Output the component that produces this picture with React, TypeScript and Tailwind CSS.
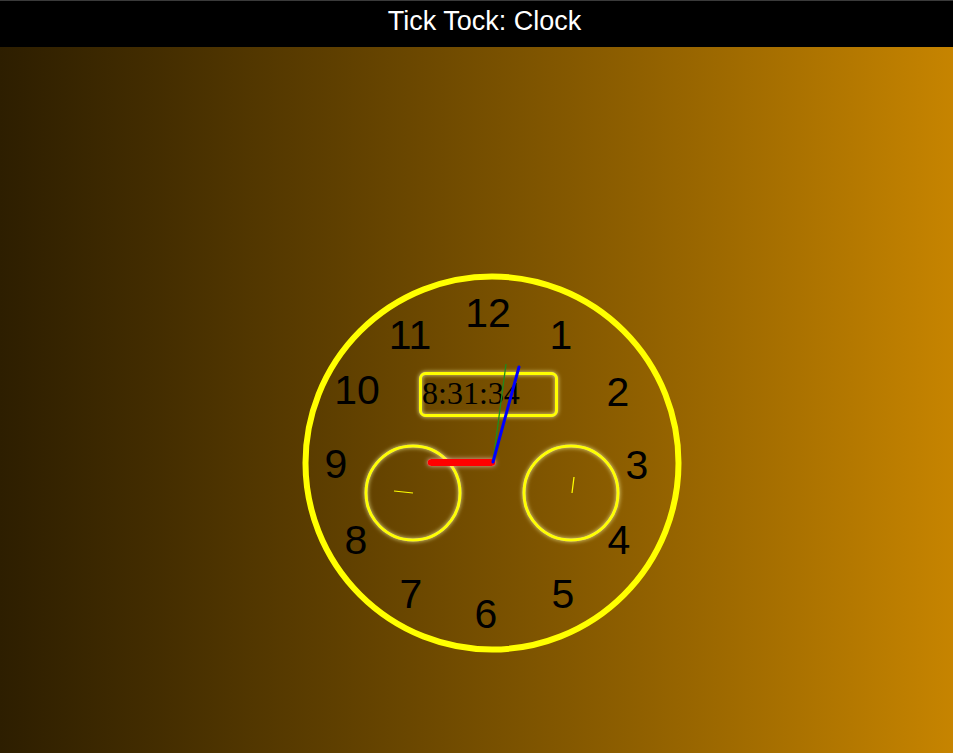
import React from 'react';

const NUMERALS: { n: string; x: number; y: number }[] = [
  { n: '12', x: 488, y: 312 },
  { n: '1', x: 561, y: 334 },
  { n: '2', x: 618, y: 391 },
  { n: '3', x: 637, y: 464 },
  { n: '4', x: 619, y: 539 },
  { n: '5', x: 563, y: 593 },
  { n: '6', x: 486, y: 613 },
  { n: '7', x: 411, y: 593 },
  { n: '8', x: 356, y: 539 },
  { n: '9', x: 336, y: 463 },
  { n: '10', x: 357, y: 389 },
  { n: '11', x: 410, y: 334 },
];

function ClockFace() {
  return (
    <svg width={400} height={400} viewBox="292 263 400 400" className="block">
      <defs>
        <filter id="glow" x="-30%" y="-30%" width="160%" height="160%">
          <feDropShadow dx="0" dy="0" stdDeviation="2" floodColor="#ffffa0" floodOpacity="0.9" />
        </filter>
        {/* horizontal line has a zero-height bbox, so use user space */}
        <filter id="glow-red" filterUnits="userSpaceOnUse" x="415" y="450" width="95" height="25">
          <feDropShadow dx="0" dy="0" stdDeviation="2.5" floodColor="#ffc8c8" floodOpacity="0.8" />
        </filter>
      </defs>

      {/* outer ring */}
      <circle cx={492} cy={463} r={186.5} fill="none" stroke="#ffff00" strokeWidth={6} />

      {/* hour numerals */}
      {NUMERALS.map((d) => (
        <text
          key={d.n}
          x={d.x}
          y={d.y + 15}
          textAnchor="middle"
          fontSize={41}
          fill="#000"
          style={{ fontFamily: '"Liberation Sans", Arial, sans-serif' }}
        >
          {d.n}
        </text>
      ))}

      {/* digital readout */}
      <rect x={420.5} y={373.5} width={136} height={42} rx={5} fill="none" stroke="#ffff00" strokeWidth={3} filter="url(#glow)" />
      <text x={422} y={404} fontSize={32} fill="#000" style={{ fontFamily: '"Liberation Serif", "Times New Roman", serif' }}>
        8:31:34
      </text>

      {/* sub dials */}
      <circle cx={413} cy={493} r={47} fill="none" stroke="#ffff00" strokeWidth={3} filter="url(#glow)" />
      <line x1={413} y1={493} x2={394} y2={491} stroke="#ffff00" strokeWidth={1.2} />
      <circle cx={571} cy={493} r={47} fill="none" stroke="#ffff00" strokeWidth={3} filter="url(#glow)" />
      <line x1={572} y1={493} x2={574} y2={477} stroke="#ffff00" strokeWidth={1.2} />

      {/* hands */}
      <line x1={431} y1={462.5} x2={492} y2={462.5} stroke="#ff0000" strokeWidth={7} strokeLinecap="round" filter="url(#glow-red)" />
      <line x1={493} y1={462} x2={506} y2={364} stroke="#1e8c1e" strokeWidth={1.3} />
      <line x1={493} y1={462} x2={519} y2={367} stroke="#0000ff" strokeWidth={3} strokeLinecap="round" />
    </svg>
  );
}

export default function App() {
  return (
    <div className="flex h-[753px] w-[953px] flex-col overflow-hidden">
      <header className="flex h-[47px] shrink-0 items-start justify-center border-t border-[#3a3a3a] bg-black pl-4 pt-[7px]">
        <h1 className="text-[27px] leading-none text-white [font-family:'Liberation_Sans',Arial,sans-serif]">
          Tick Tock: Clock
        </h1>
      </header>
      <main className="flex flex-1 bg-gradient-to-r from-[#2d1e00] to-[#c68400] pl-[292px] pt-[216px]">
        <ClockFace />
      </main>
    </div>
  );
}
